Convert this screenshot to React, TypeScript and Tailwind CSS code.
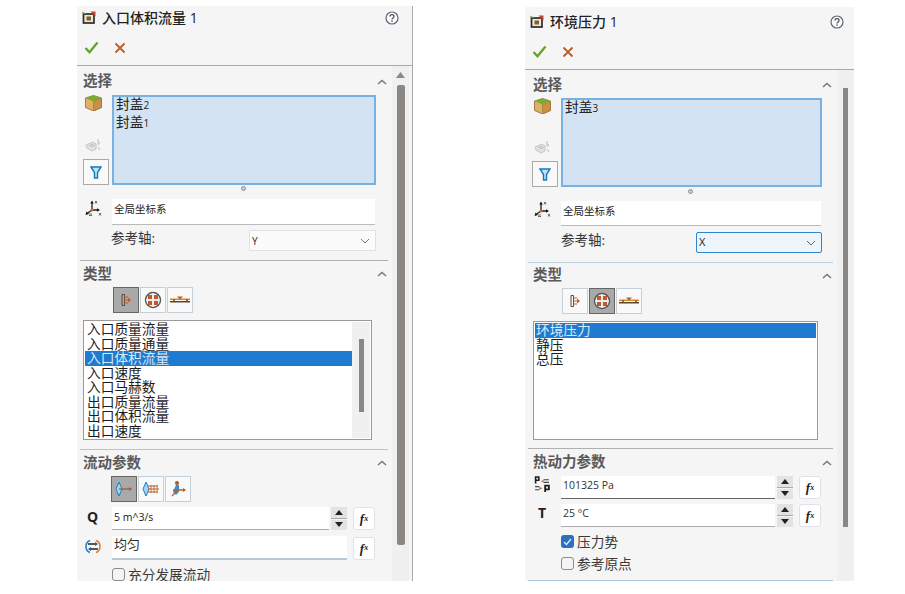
import React from "react";

const Crate = () => (
  <svg width="14" height="14" viewBox="0 0 14 14">
    <rect x="1.500" y="3" width="10.500" height="9" fill="#efe9d2" stroke="#2b2b2b" strokeWidth="1.700" />
    <rect x="4.500" y="5.500" width="4.500" height="4" fill="#7d5f33" />
    <path d="M8.500 0.500h5v5z" fill="#c8452a" />
    <path d="M0.500 0.500l4 2.500h-4z" fill="#5f9e2f" />
  </svg>
);

const Check = () => (
  <svg width="15" height="13" viewBox="0 0 15 13">
    <path d="M1.500 7l4 4.200L13.500 1.600" fill="none" stroke="#62a32b" strokeWidth="2.300" />
  </svg>
);

const Cross = () => (
  <svg width="12" height="12" viewBox="0 0 12 12">
    <path d="M1.500 1.500l9 9M10.500 1.500l-9 9" fill="none" stroke="#bd5a2c" strokeWidth="1.800" />
  </svg>
);

const Help = () => (
  <svg width="14" height="14" viewBox="0 0 14 14">
    <circle cx="7" cy="7" r="6" fill="#fbfbfb" stroke="#5f6670" strokeWidth="1.200" />
    <path d="M5 5.400c0-2.400 4-2.400 4 0 0 1.500-2 1.500-2 3" fill="none" stroke="#4d5560" strokeWidth="1.300" />
    <rect x="6.300" y="9.400" width="1.400" height="1.400" fill="#4d5560" />
  </svg>
);

const Chevron = () => (
  <svg width="10" height="6" viewBox="0 0 10 6">
    <path d="M1 5l4-3.600L9 5" fill="none" stroke="#77797c" strokeWidth="1.500" />
  </svg>
);

const Cube = () => (
  <svg width="17" height="16" viewBox="0 0 17 16">
    <path d="M8.500 0.500l8 2.500v9.500l-8 3.500-8-3.500V3z" fill="#e0b064" stroke="#8d6a3c" strokeWidth=".8" />
    <path d="M8.500 6.500l8-3v9l-8 3.500z" fill="#c98f45" stroke="#8d6a3c" strokeWidth=".5" />
    <path d="M8.500 0.500l8 2.500-8 3.500-8-3.500z" fill="#7bab2f" />
  </svg>
);

const Hand = () => (
  <svg width="16" height="16" viewBox="0 0 16 16">
    <path d="M1 8l7-3 3 2v5l-4 2-5-3z" fill="#dfe3e6" stroke="#c2c7cb" />
    <path d="M4 8l4 2M6 7l4 2" stroke="#b5babe" strokeWidth="1" />
    <path d="M13 2v5M15 5l-2 3M13 10l2 3" stroke="#c4c8cc" strokeWidth="1.200" fill="none" />
  </svg>
);

const Funnel = () => (
  <svg width="12" height="13" viewBox="0 0 12 13">
    <path d="M1 1h10L7.500 6.500V12h-3V6.500z" fill="#bfe2f5" stroke="#1379bd" strokeWidth="1.400" />
  </svg>
);

const Triad = () => (
  <svg width="17" height="17" viewBox="0 0 17 17">
    <path d="M7 10V2M7 10h6M7 10l-5 3.500" fill="none" stroke="#222" strokeWidth="1.300" />
    <path d="M5.300 3.500L7 0.500l1.700 3zM12 8.300L15 10l-3 1.700zM0.500 15l1-3.500 2.500 2.500z" fill="#111" />
    <circle cx="7" cy="10" r="1.500" fill="#d4662b" />
    <path d="M10 1l2 2.500M12 1l-2 2.500M14 13l2 2.500M16 13l-2 2.500M4 15.500h3M4 14h3" stroke="#444" strokeWidth=".8" />
  </svg>
);

const Outlet = () => (
  <svg width="14" height="14" viewBox="0 0 14 14">
    <path d="M3 1.500v11M5.500 1.500v11M3 1.500h2.500M3 12.500h2.500" stroke="#5a4a40" strokeWidth="1" fill="none" />
    <path d="M5 4h4M5 7h5M5 10h4" stroke="#c4582a" strokeWidth="1" fill="none" />
    <path d="M9 4.500l3 2.500-3 2.500z" fill="#c4582a" />
  </svg>
);

const Env = () => (
  <svg width="18" height="18" viewBox="0 0 18 18">
    <circle cx="9" cy="9" r="7.500" fill="#eeeeee" stroke="#555" strokeWidth="1.400" />
    <rect x="4" y="4" width="4" height="4" fill="#c4582a" />
    <rect x="10" y="4" width="4" height="4" fill="#c4582a" />
    <rect x="4" y="10" width="4" height="4" fill="#c4582a" />
    <rect x="10" y="10" width="4" height="4" fill="#c4582a" />
    <path d="M9 2v14M2 9h14" stroke="#eeeeee" strokeWidth="1.500" />
  </svg>
);

const Wall = () => (
  <svg width="22" height="8" viewBox="0 0 22 8">
    <rect x="1" y="2.500" width="20" height="1.500" fill="#c9912f" />
    <rect x="1" y="5" width="20" height="1.500" fill="#5a4a30" />
    <path d="M8 0.500l3 3 3-3zM4 3h2v2H4zM17 3h2v2h-2z" fill="#c4582a" />
  </svg>
);

const FlowA = () => (
  <svg width="18" height="16" viewBox="0 0 18 16">
    <path d="M4 1L1 8l3 7 3-7z" fill="#a8d4f2" stroke="#1a80c8" strokeWidth="1" />
    <path d="M4 8h12" stroke="#a5582f" strokeWidth="1.200" />
    <path d="M14 6l3 2-3 2z" fill="#a5582f" />
  </svg>
);

const FlowB = () => (
  <svg width="18" height="16" viewBox="0 0 18 16">
    <path d="M4 1L1 8l3 7 3-7z" fill="#a8d4f2" stroke="#1a80c8" strokeWidth="1" />
    <path d="M6 5h10M6 8h11M6 11h10" stroke="#b3602f" strokeWidth="1.200" />
    <path d="M9 4v8M12 4v8M15 4v8" stroke="#b3602f" strokeWidth=".8" />
  </svg>
);

const FlowC = () => (
  <svg width="18" height="18" viewBox="0 0 18 18">
    <path d="M7 5l-3 7 3 3 3-3 0-7z" fill="#3f8dd0" />
    <circle cx="8" cy="3" r="2" fill="#a5582f" />
    <path d="M4 10h12M3 16l5-5" stroke="#b3602f" strokeWidth="1.300" />
    <path d="M14 8l3 2-3 2z" fill="#b3602f" />
  </svg>
);

const Swap = () => (
  <svg width="16" height="15" viewBox="0 0 16 15">
    <path d="M5 1.500C2 2.500 1 5 1 7.500s1 5 4 6" fill="none" stroke="#2b7fc6" strokeWidth="1.600" />
    <path d="M11 1.500c3 1 4 3.500 4 6s-1 5-4 6" fill="none" stroke="#d87a35" strokeWidth="1.500" />
    <path d="M3 5h9M13 10H4" stroke="#222" strokeWidth="1.300" />
    <path d="M10 3l3 2-3 2zM6 8l-3 2 3 2z" fill="#1e5f9a" />
  </svg>
);

const Dot = () => <span className="block h-[5px] w-[5px] rounded-full border border-[#8d9499] bg-[#c9ced2]" />;

function SectionTitle({ label, h, right }: { label: string; h: string; right?: boolean }) {
  return (
    <div className={`flex items-center justify-between ${right ? "pl-[8px]" : "pl-[6px]"} pr-[5px] ${h}`}>
      <span className="text-[14.5px] leading-none font-bold text-[#5a5a5a]">{label}</span>
      <Chevron />
    </div>
  );
}

function IconButton({ children, active }: { children: React.ReactNode; active?: boolean }) {
  return (
    <span
      className={
        active
          ? "flex h-[26px] w-[26px] items-center justify-center border border-[#666] bg-[#a9a9a9]"
          : "flex h-[26px] w-[26px] items-center justify-center border border-[#c6d0d8] bg-[#f9f9f9]"
      }
    >
      {children}
    </span>
  );
}

function Spinner() {
  return (
    <span className="flex h-full w-[16px] flex-col gap-[1px]">
      <span className="flex flex-1 items-center justify-center border-b border-[#aaa] bg-[#e3e3e3] text-[0px]">
        <svg width="8" height="5" viewBox="0 0 8 5">
          <path d="M0 5l4-5 4 5z" fill="#222" />
        </svg>
      </span>
      <span className="flex flex-1 items-center justify-center bg-[#e3e3e3] text-[0px]">
        <svg width="8" height="5" viewBox="0 0 8 5">
          <path d="M0 0l4 5 4-5z" fill="#222" />
        </svg>
      </span>
    </span>
  );
}

function Fx() {
  return (
    <span className="flex h-[23px] w-[22px] shrink-0 items-center justify-center rounded-[3px] border border-[#dde3e8] bg-white font-['Liberation_Serif',serif] text-[13px] leading-none font-bold italic text-[#222]">
      f<span className="text-[8px]">x</span>
    </span>
  );
}

function Checkbox({ label, checked }: { label: string; checked?: boolean }) {
  return (
    <div className="flex items-center gap-[3px]">
      {checked ? (
        <span className="flex h-[13px] w-[13px] items-center justify-center rounded-[3px] bg-[#2b71bf]">
          <svg width="9" height="8" viewBox="0 0 9 8">
            <path d="M1 4l2.500 2.500L8 1" fill="none" stroke="#e8f1fa" strokeWidth="1.200" />
          </svg>
        </span>
      ) : (
        <span className="h-[13px] w-[13px] rounded-[3px] border border-[#8b8b8b] bg-[#f4f4f4]" />
      )}
      <span className="text-[13.7px] leading-[15px] text-[#3a3a3a]">{label}</span>
    </div>
  );
}

function ListRows({ rows, selected, right }: { rows: string[]; selected: number; right?: boolean }) {
  return (
    <div className="flex min-w-0 flex-1 flex-col">
      {rows.map((r, i) => (
        <div
          key={r}
          className={`h-[14.5px] ${right ? "pl-[1px]" : "pl-[2px]"} text-[13.7px] leading-[14.5px] ${
            i === selected ? "bg-[#1f7bd0] text-[#d8e8f6]" : "text-[#1c1c1c]"
          }`}
        >
          {r}
        </div>
      ))}
    </div>
  );
}

function Header({ title, h, titleTop, pr }: { title: string; h: string; titleTop: string; pr: string }) {
  return (
    <div className={`shrink-0 border-b border-[#a8a8a8] ${h}`}>
      <div className={`flex items-center pl-[5px] ${pr} ${titleTop}`}>
        <Crate />
        <span className="ml-[6px] flex-1 text-[14px] leading-[16px] font-medium text-[#222]">{title}</span>
        <Help />
      </div>
      <div className="mt-[15px] flex items-center gap-[15px] pl-[7px]">
        <Check />
        <Cross />
      </div>
    </div>
  );
}

function Sel({ n }: { n: string }) {
  return (
    <div className="h-[14px]">
      封盖<span className="text-[10px]">{n}</span>
    </div>
  );
}

const leftRows = ["入口质量流量", "入口质量通量", "入口体积流量", "入口速度", "入口马赫数", "出口质量流量", "出口体积流量", "出口速度"];

function LeftPanel() {
  return (
    <div className="flex h-[575px] w-[336px] shrink-0 flex-col overflow-hidden border-r border-[#a9a9a9] bg-[#f5f5f5]">
      <Header title="入口体积流量 1" h="h-[60px]" titleTop="pt-[4px]" pr="pr-[13px]" />
      <div className="flex min-h-0 flex-1">
        <div className="w-[315px] shrink-0">
          <SectionTitle label="选择" h="h-[29px] pt-[2px]" />
          <div className="flex h-[90px]">
            <div className="flex w-[35px] shrink-0 flex-col items-start pl-[6px]">
              <span className="ml-[2px] mt-[0px]"><Cube /></span>
              <span className="ml-[2px] mt-[26px]"><Hand /></span>
              <span className="mt-[6px] flex h-[26px] w-[26px] items-center justify-center border border-[#a9a9a9] bg-[#f9f9f9]"><Funnel /></span>
            </div>
            <div className="flex h-full w-[264px] flex-col gap-[4px] border-2 border-[#79b2e0] bg-[#d3e3f3] px-[2px] text-[13.7px] leading-[14px] text-[#222]">
              <Sel n="2" />
              <Sel n="1" />
            </div>
          </div>
          <div className="flex h-[14px] items-start pl-[164px] pt-[1px]"><Dot /></div>
          <div className="flex h-[26px]">
            <div className="w-[35px] shrink-0 pl-[8px] pt-[1px]"><Triad /></div>
            <div className="w-[263px] border-b border-[#bbb] bg-white pl-[2px] text-[10.5px] leading-[20px] text-[#222]">全局坐标系</div>
          </div>
          <div className="mt-[5px] flex h-[21px] items-center pl-[35px]">
            <span className="-ml-px -mt-[3px] w-[138px] text-[13.5px] leading-none text-[#333]">参考轴:</span>
            <span className="flex h-full w-[127px] items-center justify-between border border-[#dfe3e6] bg-[#fbfbfb] pl-[2px] pr-[5px] pt-[1px] text-[10px] text-[#222]">
              Y
              <svg width="10" height="6" viewBox="0 0 10 6"><path d="M1 1l4 4 4-4" fill="none" stroke="#777" strokeWidth="1" /></svg>
            </span>
          </div>
          <div className="ml-[3px] mt-[9px] h-px w-[308px] bg-[#b0b0b0]" />
          <SectionTitle label="类型" h="h-[26px]" />
          <div className="flex gap-px pl-[36px]">
            <IconButton active><Outlet /></IconButton>
            <IconButton><Env /></IconButton>
            <IconButton><Wall /></IconButton>
          </div>
          <div className="ml-[6px] mt-[7px] flex h-[120px] w-[289px] border border-[#9a9a9a] bg-white p-px">
            <ListRows rows={leftRows} selected={2} />
            <div className="flex w-[18px] shrink-0 justify-center bg-[#f0f0f0] pt-[17px]">
              <span className="h-[73px] w-[5px] bg-[#8a8785]" />
            </div>
          </div>
          <div className="ml-[3px] mt-[9px] h-px w-[308px] bg-[#b9c3cb]" />
          <SectionTitle label="流动参数" h="h-[26px]" />
          <div className="flex gap-px pl-[34px]">
            <IconButton active><FlowA /></IconButton>
            <IconButton><FlowB /></IconButton>
            <IconButton><FlowC /></IconButton>
          </div>
          <div className="mt-[5px] flex h-[23px] items-center">
            <span className="-mt-[5px] w-[35px] shrink-0 pl-[10px] text-[14px] font-bold text-[#222]">Q</span>
            <span className="h-full w-[217px] border-b border-[#aaa] bg-white pl-[2px] text-[10.5px] leading-[21px] text-[#222]">5 m^3/s</span>
            <span className="ml-[2px] mr-[6px] h-full"><Spinner /></span>
            <Fx />
          </div>
          <div className="mt-[6px] flex h-[24px] items-center">
            <span className="-mt-[3px] w-[35px] shrink-0 pl-[8px]"><Swap /></span>
            <span className="h-full w-[235px] border-b-2 border-[#b8c8d4] bg-white pl-[2px] text-[13px] leading-[17px] text-[#333]">均匀</span>
            <span className="ml-[6px]"><Fx /></span>
          </div>
          <div className="mt-[7px] pl-[35px]">
            <Checkbox label="充分发展流动" />
          </div>
        </div>
        <div className="flex w-[17px] shrink-0 flex-col items-center bg-[#f0f0f0] pt-[6px]">
          <svg width="9" height="6" viewBox="0 0 9 6"><path d="M0 6l4.500-6 4.500 6z" fill="#8a8785" /></svg>
          <span className="mt-[7px] h-[460px] w-[8px] rounded-[2px] bg-[#8a8785]" />
        </div>
      </div>
    </div>
  );
}

function RightPanel() {
  return (
    <div className="mt-px flex h-[574px] w-[329px] shrink-0 flex-col overflow-hidden bg-[#f5f5f5]">
      <Header title="环境压力 1" h="h-[63px]" titleTop="pt-[7px]" pr="pr-[10px]" />
      <div className="flex min-h-0 flex-1">
        <div className="w-[312px] shrink-0">
          <SectionTitle right label="选择" h="h-[28px] pt-[2px]" />
          <div className="flex h-[89px]">
            <div className="flex w-[36px] shrink-0 flex-col items-start pl-[7px]">
              <span className="ml-[2px] mt-[0px]"><Cube /></span>
              <span className="ml-[2px] mt-[25px]"><Hand /></span>
              <span className="mt-[6px] flex h-[26px] w-[26px] items-center justify-center border border-[#a9a9a9] bg-[#f9f9f9]"><Funnel /></span>
            </div>
            <div className="flex h-full w-[261px] flex-col border-2 border-[#79b2e0] bg-[#d3e3f3] px-[2px] text-[13.7px] leading-[14px] text-[#222]">
              <Sel n="3" />
            </div>
          </div>
          <div className="flex h-[14px] items-start pl-[163px] pt-[2px]"><Dot /></div>
          <div className="flex h-[25px]">
            <div className="w-[36px] shrink-0 pl-[9px]"><Triad /></div>
            <div className="w-[260px] border-b border-[#bbb] bg-white pl-[2px] text-[10.5px] leading-[20px] text-[#222]">全局坐标系</div>
          </div>
          <div className="mt-[6px] flex h-[21px] items-center pl-[36px]">
            <span className="-mt-[3px] w-[135px] text-[13.5px] leading-none text-[#333]">参考轴:</span>
            <span className="flex h-full w-[126px] items-center justify-between rounded-[2px] border border-[#2c87d2] bg-[#edf5fb] pl-[2px] pr-[5px] text-[11px] text-[#222]">
              X
              <svg width="10" height="6" viewBox="0 0 10 6"><path d="M1 1l4 4 4-4" fill="none" stroke="#666" strokeWidth="1" /></svg>
            </span>
          </div>
          <div className="ml-[3px] mt-[9px] h-px w-[305px] bg-[#bcd2e0]" />
          <SectionTitle right label="类型" h="h-[25px]" />
          <div className="flex gap-px pl-[37px]">
            <IconButton><Outlet /></IconButton>
            <IconButton active><Env /></IconButton>
            <IconButton><Wall /></IconButton>
          </div>
          <div className="ml-[8px] mt-[7px] h-[119px] w-[285px] border border-[#9a9a9a] bg-white p-px">
            <ListRows right rows={["环境压力", "静压", "总压"]} selected={0} />
          </div>
          <div className="ml-[3px] mt-[8px] h-px w-[305px] bg-[#b0b0b0]" />
          <SectionTitle right label="热动力参数" h="h-[27px]" />
          <div className="flex h-[23px] items-start">
            <span className="w-[36px] shrink-0 pl-[9px] text-[0px]">
              <svg width="17" height="17" viewBox="0 0 16 16">
                <path d="M1.500 7V1h3v3h-3" fill="none" stroke="#1d1d1d" strokeWidth="1.500" />
                <path d="M9 3.500h5M9 6h5" stroke="#444" strokeWidth="1" />
                <path d="M9 3.500L6.500 5 9 6z" fill="#d1612c" />
                <path d="M1 10h4M1 13h4" stroke="#444" strokeWidth="1" />
                <path d="M5 10l3 1.500L5 13z" fill="#d1612c" />
                <path d="M10.500 15V9h3.500v3.500h-3.500" fill="none" stroke="#1d1d1d" strokeWidth="1.700" />
              </svg>
            </span>
            <span className="h-full w-[214px] border-b border-[#666] bg-white pl-[2px] text-[10.5px] leading-[19px] text-[#333]">101325 Pa</span>
            <span className="ml-[2px] mr-[6px] h-full"><Spinner /></span>
            <Fx />
          </div>
          <div className="mt-[5px] flex h-[23px] items-center">
            <span className="-mt-[6px] w-[36px] shrink-0 pl-[13px] text-[14px] font-bold text-[#222]">T</span>
            <span className="h-full w-[214px] border-b border-[#aaa] bg-white pl-[2px] text-[10.5px] leading-[18px] text-[#333]">25 °C</span>
            <span className="ml-[2px] mr-[6px] h-full"><Spinner /></span>
            <Fx />
          </div>
          <div className="mt-[7px] pl-[36px]"><Checkbox label="压力势" checked /></div>
          <div className="mt-[7px] pl-[36px]"><Checkbox label="参考原点" /></div>
          <div className="ml-[3px] mt-[9px] h-px w-[305px] bg-[#a9c8e0]" />
        </div>
        <div className="flex w-[17px] shrink-0 justify-center bg-[#f0f0f0] pt-[18px]">
          <span className="h-[439px] w-[5px] bg-[#8a8785]" />
        </div>
      </div>
    </div>
  );
}

export default function App() {
  return (
    <div className="flex h-[594px] w-[905px] items-start gap-[112px] overflow-hidden bg-white pl-[77px] pt-[6px] font-['Open_Sans','Noto_Sans_CJK_SC',sans-serif]">
      <LeftPanel />
      <RightPanel />
    </div>
  );
}
